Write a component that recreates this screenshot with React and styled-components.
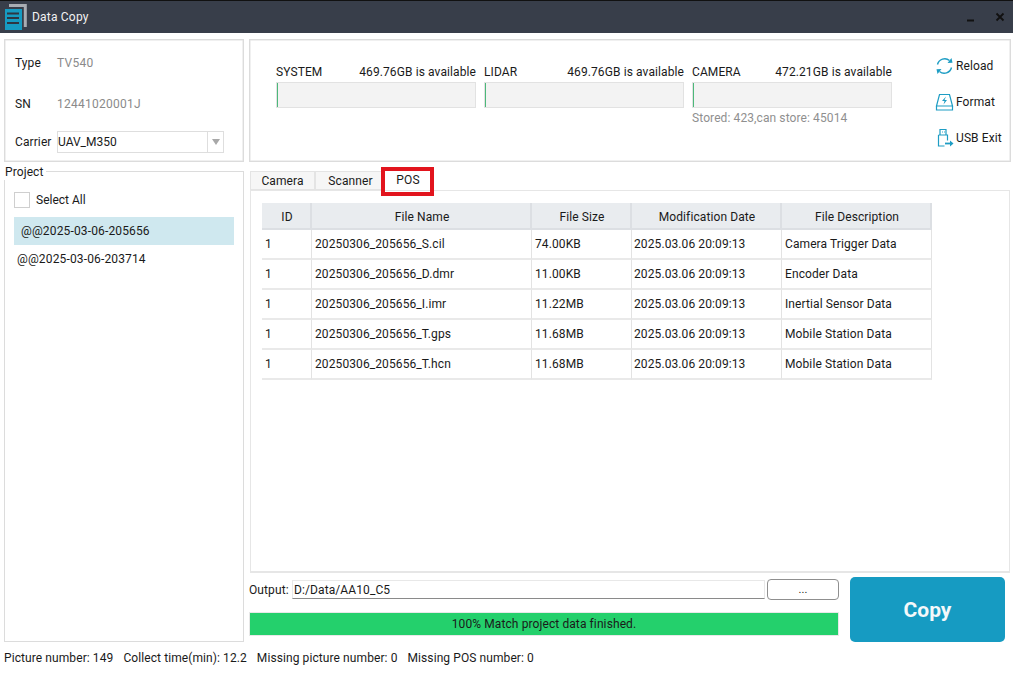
import React from "react";
import styled, { createGlobalStyle } from "styled-components";

const Global = createGlobalStyle`
  html, body { margin: 0; padding: 0; background: #fff; }
  body { font-family: Roboto, "Liberation Sans", sans-serif; font-size: 12px; letter-spacing: 0.1px; color: #1a1a1a; }
  * { box-sizing: border-box; }
`;

const Page = styled.div`
  width: 1013px; height: 676px; display: flex; flex-direction: column; overflow: hidden; background: #fff;
`;
const TitleBar = styled.header`
  height: 33px; flex: none; background: #383e4a; border-top: 1px solid #111; display: flex; align-items: center;
  padding: 0 8px 0 4px; color: #f2f2f2;
`;
const AppTitle = styled.span`margin-left: 4px; font-size: 12px; letter-spacing: 0.2px;`;
const WindowButtons = styled.div`margin-left: auto; display: flex; align-items: center; gap: 19px;`;
const Main = styled.main`
  flex: 1; display: grid; grid-template-columns: 240px 762px; column-gap: 5px; padding: 6px 0 0 4px;
  grid-template-rows: 123px 1fr; align-content: start;
`;
const Box = styled.section`border: 1px solid #dcdcdc; box-shadow: 0 0 0 .5px #e2e2e2 inset;`;
const InfoBox = styled(Box)`
  display: flex; flex-direction: column; padding: 13px 19px 9px 10px;
`;
const InfoRow = styled.div`
  display: flex; align-items: center; height: 20px; margin-bottom: ${p => p.$gap}px;
`;
const InfoLabel = styled.span`width: 42px; flex: none; white-space: nowrap;`;
const InfoValue = styled.span`color: #8a8a8a; letter-spacing: 0.25px;`;
const Combo = styled.div`
  flex: 1; height: 22px; border: 1px solid #dedede; display: flex; align-items: center; padding-left: 0;
  font-size: 12px; letter-spacing: 0; justify-content: space-between;
`;
const ComboArrow = styled.span`
  width: 16px; height: 100%; border-left: 1px solid #dedede; display: flex; align-items: center; justify-content: center;
  &::after { content: ""; border-left: 4px solid transparent; border-right: 4px solid transparent; border-top: 6px solid #a8a8a8; }
`;
const StorageBox = styled(Box)`display: flex; padding: 23px 0 0 26px;`;
const Disk = styled.div`width: 200px; margin-right: 8px; flex: none;`;
const DiskHead = styled.div`display: flex; justify-content: space-between; height: 17px; align-items: center; white-space: nowrap;`;
const DiskBar = styled.div`
  height: 26px; background: #f3f3f3; border: 1px solid #e2e2e2; margin-top: 2px;
`;
const DiskFill = styled.div`height: 100%; background: #4cb87a;`;
const Stored = styled.div`color: #8f8f8f; margin-top: 3px; white-space: nowrap;`;
const Actions = styled.div`
  margin-left: 35px; display: flex; flex-direction: column; gap: 16px; margin-top: -7px;
`;
const Action = styled.div`display: flex; align-items: center; height: 20px; white-space: nowrap; gap: 2px;`;
const ActionIcon = styled.svg`width: 19px; height: 20px; flex: none; fill: none; stroke: #1e9dc4; stroke-width: 1.2;`;

const ProjectColumn = styled.div`padding-top: 9px;`;
const ProjectBox = styled.section`
  height: 471px; border: 1px solid #dcdcdc; padding: 19px 9px 0 9px; position: relative;
`;
const ProjectLegend = styled.span`
  position: absolute; left: -2px; top: -7px; height: 15px; line-height: 14px; padding: 0 2px 0 2px; background: #fff;
`;
const SelectAll = styled.label`display: flex; align-items: center; gap: 6px; height: 17px; margin-bottom: 9px; letter-spacing: 0;`;
const Check = styled.span`width: 16px; height: 16px; border: 1px solid #cfcfcf; background: #fff; flex: none;`;
const ProjectItem = styled.div`
  height: 28px; display: flex; align-items: center; padding: 0 0 0 ${p => p.$active ? 7 : 3}px;
  background: ${p => p.$active ? "#cfe8ef" : "transparent"}; letter-spacing: 0.15px;
`;

const Right = styled.div`padding-top: 9px; display: flex; flex-direction: column;`;
const TabBar = styled.div`display: flex; height: 20px; padding-left: 1px; position: relative;`;
const Tab = styled.div`
  width: ${p => p.$w}px; height: 19px; display: flex; align-items: center; justify-content: center;
  padding-left: ${p => p.$pad || 0}px;
  background: ${p => p.$active ? "#fff" : "#f6f6f6"};
  border: 1px solid #e4e4e4; border-bottom: ${p => p.$active ? "none" : "1px solid #e4e4e4"};
  ${p => p.$active ? "margin-top: -2px; height: 21px; z-index: 1;" : ""}
`;
const Highlight = styled.div`
  position: absolute; left: 132px; top: -4px; width: 53px; height: 29px; border: 4px solid #e2141d; z-index: 2; pointer-events: none;
`;
const TabPanel = styled.div`
  height: 383px; width: 760px; margin-left: 1px; margin-top: -1px; border: 1px solid #e6e6e6; border-bottom-width: 2px; padding: 12px 0 0 11px; background: #fff;
`;
const Table = styled.table`border-collapse: separate; border-spacing: 0; table-layout: fixed; width: 670px; font-size: 12px;`;
const Th = styled.th`
  font-weight: 400; height: 27px; background: #e9ecef; border: 0 solid #dcdfe3; border-width: 0 2px 2px 0; width: ${p => p.$w}px; text-align: center; padding: 3px 0 0 2px;
`;
const Td = styled.td`
  height: 30px; border-right: 1px solid #e3e3e3; border-bottom: 2px solid #e9e9e9; padding: 0 0 0 ${p => p.$pad || 3}px; white-space: nowrap;
`;

const OutputArea = styled.div`display: grid; grid-template-columns: 590px 155px; column-gap: 11px; margin-top: 4px;`;
const OutputLeft = styled.div`display: flex; flex-direction: column;`;
const OutputRow = styled.div`display: flex; align-items: center; height: 23px; padding-top: 2px;`;
const OutputLabel = styled.span`width: 43px; flex: none; white-space: nowrap;`;
const PathInput = styled.div`
  width: 473px; height: 19px; border: 1px solid #e8e8e8; border-bottom: 1px solid #8a8a8a; padding-left: 1px; display: flex; align-items: center; flex: none;
`;
const Browse = styled.div`
  flex: 1; margin-left: 2px; height: 21px; border: 1px solid #8f8f8f; border-radius: 4px; display: flex; align-items: center; justify-content: center; font-size: 11px;
`;
const Progress = styled.div`
  height: 24px; margin-top: 12px; background: #24d06c; border: 1px solid #e8e8e8; display: flex; align-items: center; justify-content: center;
`;
const CopyButton = styled.button`
  height: 65px; border: none; border-radius: 5px; background: #169bc2; color: #f4f8fa; font: 700 21px Roboto, sans-serif; padding: 0;
`;
const StatusBar = styled.footer`
  display: flex; gap: 10px; padding-left: 4px; height: 34px; flex: none; align-items: center; white-space: nowrap; padding-bottom: 2px; letter-spacing: 0.09px;
`;

const disks = [
  ["SYSTEM", "469.76GB is available"],
  ["LIDAR", "469.76GB is available"],
  ["CAMERA", "472.21GB is available"],
];
const rows = [
  ["20250306_205656_S.cil", "74.00KB", "Camera Trigger Data"],
  ["20250306_205656_D.dmr", "11.00KB", "Encoder Data"],
  ["20250306_205656_I.imr", "11.22MB", "Inertial Sensor Data"],
  ["20250306_205656_T.gps", "11.68MB", "Mobile Station Data"],
  ["20250306_205656_T.hcn", "11.68MB", "Mobile Station Data"],
];

const Logo = () => (
  <svg width="24" height="28" viewBox="0 0 24 28" style={{ flex: "none" }}>
    <path d="M5 2.5H21.3V24" fill="none" stroke="#a9adb3" strokeWidth="3" />
    <rect x="1" y="6" width="17" height="21" fill="#169bc2" />
    <path d="M3 10.5h12M3 15h12M3 20h12" stroke="#2f3642" strokeWidth="1.8" />
  </svg>
);

export default function App() {
  return (
    <Page>
      <Global />
      <TitleBar>
        <Logo />
        <AppTitle>Data Copy</AppTitle>
        <WindowButtons>
          <svg width="10" height="10" viewBox="0 0 10 10"><path d="M1 8.5h7" stroke="#111" strokeWidth="2" /></svg>
          <svg width="10" height="10" viewBox="0 0 10 10"><path d="M1.5 1.5l7 7M8.5 1.5l-7 7" stroke="#111" strokeWidth="1.8" /></svg>
        </WindowButtons>
      </TitleBar>
      <Main>
        <InfoBox>
          <InfoRow $gap={21}><InfoLabel>Type</InfoLabel><InfoValue>TV540</InfoValue></InfoRow>
          <InfoRow $gap={18}><InfoLabel>SN</InfoLabel><InfoValue>12441020001J</InfoValue></InfoRow>
          <InfoRow $gap={0}>
            <InfoLabel>Carrier</InfoLabel>
            <Combo>UAV_M350<ComboArrow /></Combo>
          </InfoRow>
        </InfoBox>
        <StorageBox>
          {disks.map(([n, a], i) => (
            <Disk key={n}>
              <DiskHead><span>{n}</span><span>{a}</span></DiskHead>
              <DiskBar><DiskFill style={{ width: "1px" }} /></DiskBar>
              {i === 2 && <Stored>Stored: 423,can store: 45014</Stored>}
            </Disk>
          ))}
          <Actions>
            <Action>
              <ActionIcon viewBox="0 0 19 20" style={{ strokeWidth: 1.4 }}>
                <path d="M2.5 8.5A7.5 7.5 0 0 1 14.5 4.5M16.5 11.5A7.5 7.5 0 0 1 4.5 15.5" />
                <path d="M12.5 7l5-.2-1-4.8zM6.5 13l-5 .2 1 4.8z" fill="#1e9dc4" stroke="none" />
              </ActionIcon>
              Reload
            </Action>
            <Action>
              <ActionIcon viewBox="0 0 19 20">
                <path d="M4.5 2.5h10l3 11.5h-16zM1.5 14h16v4h-16z" />
                <path d="M11 4.5L7 9h2.5l-1 3.5 3.5-4.5H9.5z" fill="#1e9dc4" stroke="none" />
              </ActionIcon>
              Format
            </Action>
            <Action>
              <ActionIcon viewBox="0 0 19 20">
                <path d="M5 1.5h6v5.5H5zM3.5 7h9v5.5M3.5 7v11h6" />
                <path d="M7 4h.9M9 4h.9" />
                <path d="M10 15.5h6" strokeWidth="1.8" />
                <path d="M15 12.5l3.5 3-3.5 3z" fill="#1e9dc4" stroke="none" />
              </ActionIcon>
              USB Exit
            </Action>
          </Actions>
        </StorageBox>
        <ProjectColumn>
          <ProjectBox>
            <ProjectLegend>Project</ProjectLegend>
            <SelectAll><Check />Select All</SelectAll>
            <ProjectItem $active>@@2025-03-06-205656</ProjectItem>
            <ProjectItem>@@2025-03-06-203714</ProjectItem>
          </ProjectBox>
        </ProjectColumn>
        <Right>
          <TabBar>
            <Tab $w={65}>Camera</Tab>
            <Tab $w={67} $pad={4}>Scanner</Tab>
            <Tab $w={52} $active>POS</Tab>
            <Highlight />
          </TabBar>
          <TabPanel>
            <Table>
              <thead>
                <tr>
                  <Th $w={50}>ID</Th>
                  <Th $w={220}>File Name</Th>
                  <Th $w={100}>File Size</Th>
                  <Th $w={150}>Modification Date</Th>
                  <Th $w={150}>File Description</Th>
                </tr>
              </thead>
              <tbody>
                {rows.map(r => (
                  <tr key={r[0]}>
                    <Td>1</Td>
                    <Td>{r[0]}</Td>
                    <Td>{r[1]}</Td>
                    <Td $pad={2}>2025.03.06 20:09:13</Td>
                    <Td>{r[2]}</Td>
                  </tr>
                ))}
              </tbody>
            </Table>
          </TabPanel>
          <OutputArea>
            <OutputLeft>
              <OutputRow>
                <OutputLabel>Output:</OutputLabel>
                <PathInput>D:/Data/AA10_C5</PathInput>
                <Browse>...</Browse>
              </OutputRow>
              <Progress>100% Match project data finished.</Progress>
            </OutputLeft>
            <CopyButton>Copy</CopyButton>
          </OutputArea>
        </Right>
      </Main>
      <StatusBar>
        <span>Picture number: 149</span>
        <span>Collect time(min): 12.2</span>
        <span>Missing picture number: 0</span>
        <span>Missing POS number: 0</span>
      </StatusBar>
    </Page>
  );
}
